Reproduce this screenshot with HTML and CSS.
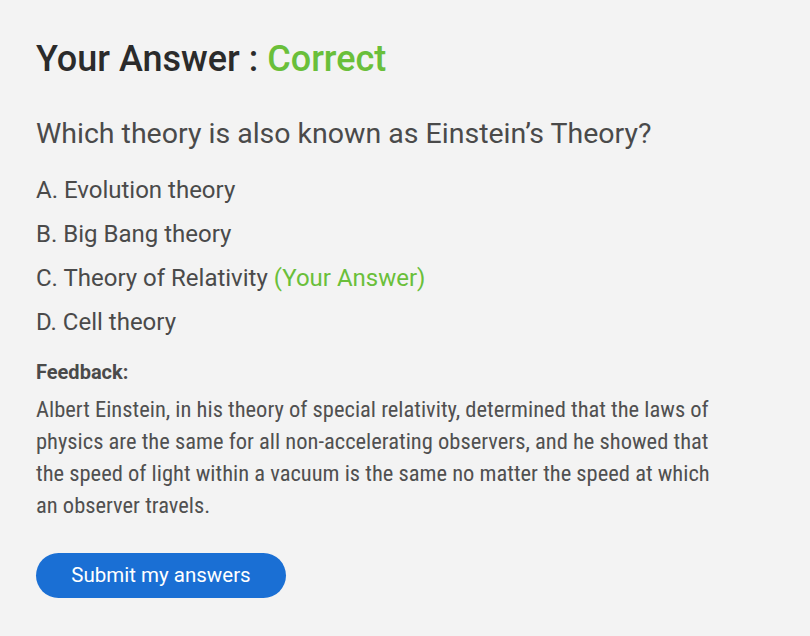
FILE: index.html
```html
<!DOCTYPE html>
<html lang="en">
<head>
  <meta charset="UTF-8">
  <meta name="viewport" content="width=device-width, initial-scale=1.0">
  <title>Quiz Result</title>
  <link rel="stylesheet" href="styles.css">
</head>
<body>

  <div class="container">
    <h1 class="result-title">Your Answer : <span class="correct">Correct</span></h1>

    <h2 class="question">Which theory is also known as Einstein’s Theory?</h2>

    <ul class="options">
      <li>A. Evolution theory</li>
      <li>B. Big Bang theory</li>
      <li>C. Theory of Relativity <span class="correct">(Your Answer)</span></li>
      <li>D. Cell theory</li>
    </ul>

    <div class="feedback">
      <div class="feedback-label">Feedback:</div>
      <p class="feedback-text">Albert Einstein, in his theory of special relativity, determined that the laws of physics are the same for all non-accelerating observers, and he showed that the speed of light within a vacuum is the same no matter the speed at which an observer travels.</p>
    </div>

    <button class="button">Submit my answers</button>
  </div>

</body>
</html>
```

FILE: styles.css
```css
body {
  font-family: 'Roboto', 'Liberation Sans', sans-serif;
  background-color: #f3f3f3;
  margin: 0;
  padding: 0;
  color: #4a4a4a;
}
.container {
  padding: 37px 36px 30px 36px;
}
.result-title {
  font-size: 36px;
  font-weight: 500;
  color: #2b2b2b;
  margin: 0 0 35px 0;
  line-height: 44px;
}
.correct {
  color: #6abf3a;
}
.question {
  font-size: 28.5px;
  font-weight: 400;
  color: #4a4a4a;
  margin: 0 0 15.5px 0;
  line-height: 36px;
}
.options {
  list-style: none;
  margin: 0;
  padding: 0;
}
.options li {
  font-size: 24px;
  line-height: 44px;
}
.feedback {
  margin-top: 13px;
}
.feedback-label {
  font-size: 20px;
  font-weight: 700;
  line-height: 30px;
}
.feedback-text {
  font-size: 22.5px;
  line-height: 32px;
  font-stretch: condensed;
  color: #505050;
  margin: 6px 0 0 0;
  max-width: 700px;
}
.button {
  margin-top: 32px;
  width: 250px;
  height: 45px;
  background-color: #1a6fd4;
  border: none;
  border-radius: 23px;
  color: white;
  font-family: 'Roboto', sans-serif;
  font-size: 20.5px;
  cursor: pointer;
}
```
